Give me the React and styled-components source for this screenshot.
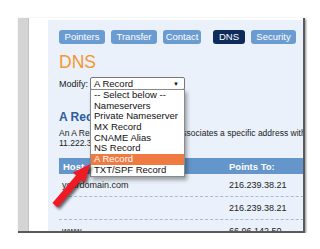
import styled, { createGlobalStyle } from 'styled-components';

const GlobalStyle = createGlobalStyle`
    body {
        margin: 0;
        background: #fff;
        font-family: "Liberation Sans", Arial, sans-serif;
    }
`

const tabs = [
    { label: 'Pointers', w: 46 },
    { label: 'Transfer', w: 46 },
    { label: 'Contact', w: 38, gap: 12 },
    { label: 'DNS', w: 32, active: true },
    { label: 'Security', w: 45 },
];

const options = [
    '-- Select below --',
    'Nameservers',
    'Private Nameserver',
    'MX Record',
    'CNAME Alias',
    'NS Record',
    'A Record',
    'TXT/SPF Record',
];

const rows = [
    { host: 'yourdomain.com', to: '216.239.38.21' },
    { host: '', to: '216.239.38.21' },
    { host: 'www', to: '66.96.142.50' },
];

const App = () => {
    return (
        <Page>
            <GlobalStyle />
            <Frame>
                <Gutter />
                <Gap />
                <Panel>
                    <Tabs>
                        {tabs.map((t) => (
                            <Tab key={t.label} $w={t.w} $gap={t.gap} $active={t.active}>{t.label}</Tab>
                        ))}
                    </Tabs>
                    <Title>DNS</Title>
                    <ModifyRow>
                        <Label>Modify:</Label>
                        <Select>
                            <span>A Record</span>
                            <Caret>▼</Caret>
                            <Options>
                                {options.map((o) => (
                                    <Option key={o} $hl={o === 'A Record'}>{o}</Option>
                                ))}
                            </Options>
                        </Select>
                    </ModifyRow>
                    <SectionTitle>A Record</SectionTitle>
                    <Desc>
                        An A Record (Address Record) associates a specific address with a domain name<br />
                        11.222.333.444
                    </Desc>
                    <Table>
                        <HeadRow>
                            <HostHead>Host</HostHead>
                            <span>Points To:</span>
                        </HeadRow>
                        {rows.map((r, i) => (
                            <Row key={i}>
                                <HostCell>{r.host}</HostCell>
                                <span>{r.to}</span>
                            </Row>
                        ))}
                    </Table>
                    <Arrow width="60" height="60" viewBox="0 0 60 60">
                        <polygon
                            points="42.5,4 36.6,22.8 33.3,20 9.6,47.4 4.4,42.9 28.1,15.3 24.8,12.5"
                            fill="#ee1b24"
                        />
                    </Arrow>
                </Panel>
            </Frame>
        </Page>
    );
};

const Page = styled.div`
    padding: 18px 0 0 18px;
`

const Frame = styled.div`
    display: flex;
    width: 285px;
    height: 213px;
    border-right: 2px solid #5a5a5a;
    border-bottom: 2px solid #5a5a5a;
    box-shadow: 1px 1px 2px rgba(0, 0, 0, 0.45);
`

const Gutter = styled.div`
    width: 11px;
    box-sizing: border-box;
    background: #d4d4d4;
    border-right: 1px solid #c2c2c2;
`

const Gap = styled.div`
    width: 19px;
    background: #fff;
`

const Panel = styled.div`
    position: relative;
    flex: 1;
    margin-top: 2px;
    padding: 10px 0 0 11px;
    background: #eaf1fb;
    overflow: hidden;
`

const Tabs = styled.div`
    display: flex;
    gap: 6px;
`

const Tab = styled.div`
    width: ${(p) => p.$w}px;
    height: 14px;
    margin-right: ${(p) => (p.$gap ? p.$gap - 6 : 0)}px;
    border-radius: 3px;
    background: ${(p) => (p.$active ? '#0e2c5b' : '#6a9bd1')};
    color: #fff;
    font-size: 9.5px;
    line-height: 14px;
    text-align: center;
`

const Title = styled.div`
    margin-top: 8px;
    font-size: 17.5px;
    line-height: 20px;
    color: #f5972a;
`

const ModifyRow = styled.div`
    display: flex;
    align-items: center;
    margin-top: 5px;
    height: 13px;
`

const Label = styled.span`
    width: 31px;
    font-size: 9px;
    color: #222;
`

const Select = styled.div`
    position: relative;
    box-sizing: border-box;
    display: flex;
    align-items: center;
    justify-content: space-between;
    width: 95px;
    height: 13px;
    padding: 0 5px 0 3px;
    border: 1px solid #777;
    border-radius: 2px;
    background: #fff;
    font-size: 9.5px;
    color: #111;
`

const Caret = styled.span`
    font-size: 6px;
`

const Options = styled.div`
    position: absolute;
    top: 100%;
    left: -1px;
    z-index: 2;
    width: 95px;
    box-sizing: border-box;
    border: 1px solid #8a8a8a;
    background: #fff;
    box-shadow: 2px 3px 4px rgba(0, 0, 0, 0.35);
`

const Option = styled.div`
    padding-left: 3px;
    height: 10.7px;
    line-height: 10.7px;
    font-size: 9.5px;
    white-space: nowrap;
    overflow: hidden;
    background: ${(p) => (p.$hl ? '#f07b42' : 'transparent')};
    color: ${(p) => (p.$hl ? '#fff' : '#111')};
`

const SectionTitle = styled.div`
    margin-top: 20px;
    font-size: 12px;
    font-weight: bold;
    line-height: 14px;
    color: #2b5d9e;
`

const Desc = styled.div`
    margin-top: 4px;
    font-size: 8.5px;
    line-height: 10px;
    color: #222;
    white-space: nowrap;
`

const Table = styled.div`
    margin-top: 10px;
    width: 270px;
`

const HeadRow = styled.div`
    display: grid;
    grid-template-columns: 170px 1fr;
    align-items: center;
    height: 16px;
    background: #6495cb;
    color: #fff;
    font-size: 9.5px;
    font-weight: bold;
`

const HostHead = styled.span`
    padding-left: 4px;
`

const Row = styled.div`
    display: grid;
    grid-template-columns: 170px 1fr;
    align-items: center;
    height: 23px;
    box-sizing: border-box;
    border-bottom: 1px dashed #a3bcd9;
    font-size: 9px;
    color: #222;
`

const HostCell = styled.span`
    padding-left: 3px;
`

const Arrow = styled.svg`
    position: absolute;
    left: 0;
    top: 140px;
    z-index: 3;
    filter: drop-shadow(2px 2px 1.5px rgba(0, 0, 0, 0.6));
`

export default App;
